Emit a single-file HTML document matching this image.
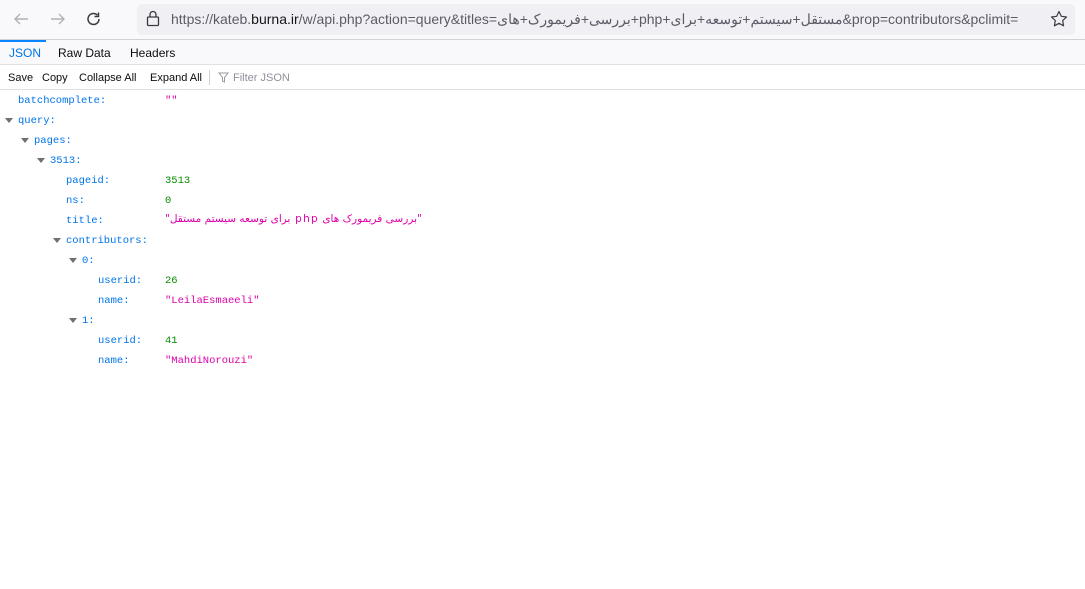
<!DOCTYPE html>
<html><head><meta charset="utf-8"><style>
body{margin:0;width:1085px;height:589px;background:#fff;font-family:"Liberation Sans","Noto Sans CJK SC",sans-serif;position:relative;overflow:hidden}
.nav{position:absolute;top:0;left:0;width:1085px;height:39px;background:#f9f9fb;border-bottom:1px solid #d0d0d7}
.url{position:absolute;left:137px;top:4px;width:938px;height:31px;background:#f0f0f4;border-radius:5px}
.urltxt{position:absolute;left:171px;top:11px;font-size:14px;color:#5b5b66;white-space:nowrap;width:868px;overflow:hidden}
.urltxt b{font-weight:normal;color:#15141a}
.tabs{position:absolute;top:40px;left:0;width:1085px;height:24px;background:#f9f9fb;border-bottom:1px solid #e0e0e2}
.tab{position:absolute;top:6px;font-size:12px;color:#0c0c0d}
.tool{position:absolute;top:65px;left:0;width:1085px;height:24px;border-bottom:1px solid #e0e0e2;font-size:11px}
.tool span{position:absolute;top:7px;color:#0c0c0d}
.r{position:absolute;font-family:"Liberation Mono","DejaVu Sans Mono",monospace;font-size:10.5px;color:#0074e8;white-space:nowrap}
.v{position:absolute;left:165px;font-family:"Liberation Mono","DejaVu Sans Mono",monospace;font-size:10.5px;white-space:nowrap}
.n{color:#058b00}.s{color:#dd00a9}
.t{position:absolute;width:0;height:0;border-left:4px solid transparent;border-right:4px solid transparent;border-top:5px solid #6e6e73}
</style></head><body>
<div class="nav">
<svg style="position:absolute;left:12px;top:11px" width="18" height="16" viewBox="0 0 18 16"><path d="M16 8H3M8 3L3 8l5 5" stroke="#b0b0b8" stroke-width="1.4" fill="none"/></svg>
<svg style="position:absolute;left:49px;top:11px" width="18" height="16" viewBox="0 0 18 16"><path d="M2 8h13M10 3l5 5-5 5" stroke="#b0b0b8" stroke-width="1.4" fill="none"/></svg>
<svg style="position:absolute;left:85px;top:10px" width="18" height="18" viewBox="0 0 18 18"><path d="M14 9a5.5 5.5 0 1 1-1.6-3.9" stroke="#3a3a40" stroke-width="1.5" fill="none"/><path d="M13.5 2.5v4h-4" stroke="#3a3a40" stroke-width="1.5" fill="none"/></svg>
<div class="url"></div>
<svg style="position:absolute;left:146px;top:10px" width="14" height="17" viewBox="0 0 14 17"><rect x="1.5" y="7" width="11" height="8.5" rx="1" stroke="#3a3a40" stroke-width="1.3" fill="none"/><path d="M4 7V4.5a3 3 0 0 1 6 0V7" stroke="#3a3a40" stroke-width="1.3" fill="none"/></svg>
<div class="urltxt">https://kateb.<b>burna.ir</b>/w/api.php?action=query&amp;titles=<span dir="rtl">بررسی+فریمورک+های</span>+php+<span dir="rtl">مستقل+سیستم+توسعه+برای</span>&amp;prop=contributors&amp;pclimit=</div>
<svg style="position:absolute;left:1050px;top:10px" width="18" height="18" viewBox="0 0 18 18"><path d="M9 1.5l2.3 4.8 5.2.7-3.8 3.6.9 5.2L9 13.3l-4.6 2.5.9-5.2L1.5 7l5.2-.7z" stroke="#3a3a40" stroke-width="1.2" fill="none" stroke-linejoin="round"/></svg>
</div>
<div class="tabs">
<div style="position:absolute;left:0;top:0;width:46px;height:2px;background:#0a84ff"></div>
<span class="tab" style="left:9px;color:#0074e8">JSON</span>
<span class="tab" style="left:58px">Raw Data</span>
<span class="tab" style="left:130px">Headers</span>
</div>
<div class="tool">
<span style="left:8px">Save</span><span style="left:42px">Copy</span><span style="left:79px">Collapse All</span><span style="left:150px">Expand All</span>
<div style="position:absolute;left:209px;top:5px;width:1px;height:15px;background:#d0d0d7"></div>
<svg style="position:absolute;left:218px;top:7px" width="11" height="11" viewBox="0 0 11 11"><path d="M1 1h9L6.5 5.5V10L4.5 9V5.5z" stroke="#9a9aa0" fill="none"/></svg>
<span style="left:233px;color:#8f8f9d">Filter JSON</span>
</div>
<div class="r" style="left:18px;top:95px">batchcomplete:</div><div class="v s" style="top:95px">""</div>
<div class="t" style="left:5px;top:118px"></div><div class="r" style="left:18px;top:115px">query:</div>
<div class="t" style="left:21px;top:138px"></div><div class="r" style="left:34px;top:135px">pages:</div>
<div class="t" style="left:37px;top:158px"></div><div class="r" style="left:50px;top:155px">3513:</div>
<div class="r" style="left:66px;top:175px">pageid:</div><div class="v n" style="top:175px">3513</div>
<div class="r" style="left:66px;top:195px">ns:</div><div class="v n" style="top:195px">0</div>
<div class="r" style="left:66px;top:215px">title:</div><div class="v s" style="top:213px;font-family:'DejaVu Sans',sans-serif;font-size:10.5px;letter-spacing:1.3px">"<span dir="rtl">بررسی فریمورک های php برای توسعه سیستم مستقل</span>"</div>
<div class="t" style="left:53px;top:238px"></div><div class="r" style="left:66px;top:235px">contributors:</div>
<div class="t" style="left:69px;top:258px"></div><div class="r" style="left:82px;top:255px">0:</div>
<div class="r" style="left:98px;top:275px">userid:</div><div class="v n" style="top:275px">26</div>
<div class="r" style="left:98px;top:295px">name:</div><div class="v s" style="top:295px">"LeilaEsmaeeli"</div>
<div class="t" style="left:69px;top:318px"></div><div class="r" style="left:82px;top:315px">1:</div>
<div class="r" style="left:98px;top:335px">userid:</div><div class="v n" style="top:335px">41</div>
<div class="r" style="left:98px;top:355px">name:</div><div class="v s" style="top:355px">"MahdiNorouzi"</div>
</body></html>
